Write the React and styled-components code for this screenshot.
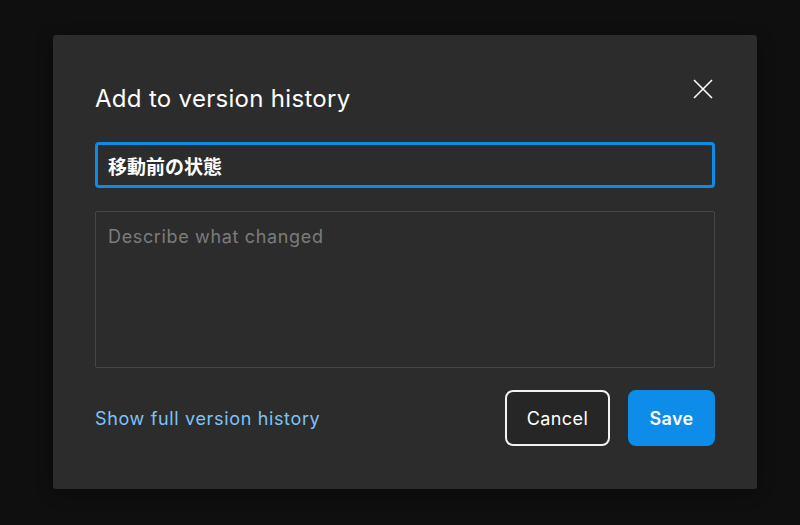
import React from "react";
import styled, { createGlobalStyle } from "styled-components";

const Global = createGlobalStyle`
  html, body { margin: 0; padding: 0; background: #0f0f0f; }
  body { font-family: Inter, "Noto Sans CJK JP", sans-serif; }
  * { box-sizing: border-box; }
`;

const Page = styled.div`
  width: 800px;
  height: 525px;
  padding: 35px 43px 36px 53px;
  background: #0f0f0f;
`;

const Dialog = styled.div`
  width: 704px;
  height: 454px;
  background: #2c2c2c;
  border-radius: 3px;
  box-shadow: 0 4px 16px rgba(0, 0, 0, 0.35);
  padding: 42px;
  display: flex;
  flex-direction: column;
`;

const Header = styled.div`
  display: flex;
  align-items: flex-start;
  justify-content: space-between;
  height: 65px;
`;

const Title = styled.h2`
  margin: 6px 0 0 0;
  font-size: 24px;
  font-weight: 400;
  line-height: 32px;
  color: #ffffff;
  letter-spacing: 0.3px;
`;

const CloseButton = styled.button`
  background: none;
  border: none;
  padding: 0;
  margin: 0;
  width: 24px;
  height: 24px;
  display: flex;
  align-items: center;
  justify-content: center;
  cursor: pointer;
`;

const NameInput = styled.div`
  height: 46px;
  border: 3px solid #0c8ce9;
  border-radius: 4px;
  padding: 0 10px;
  display: flex;
  align-items: center;
  font-family: Inter, "Noto Sans CJK JP", sans-serif;
  font-size: 19px;
  font-weight: 600;
  color: #ffffff;
`;

const TextArea = styled.div`
  margin-top: 23px;
  height: 157px;
  border: 1px solid #464646;
  border-radius: 2px;
  padding: 13px 12px;
  font-size: 18px;
  line-height: 24px;
  letter-spacing: 0.65px;
  color: #7c7c7c;
`;

const Footer = styled.div`
  margin-top: 22px;
  display: flex;
  align-items: center;
  justify-content: space-between;
`;

const Link = styled.a`
  font-size: 18px;
  letter-spacing: 0.65px;
  color: #7cc4f8;
  text-decoration: none;
  cursor: pointer;
`;

const Buttons = styled.div`
  display: flex;
  gap: 18px;
`;

const Button = styled.button`
  height: 56px;
  border-radius: 8px;
  font-family: Inter, sans-serif;
  font-size: 18px;
  letter-spacing: 0.4px;
  padding: 0;
  color: #ffffff;
  cursor: pointer;
  border: ${(p) => (p.$primary ? "none" : "2px solid #f2f2f2")};
  background: ${(p) => (p.$primary ? "#0d8ce9" : "#262626")};
  font-weight: ${(p) => (p.$primary ? 600 : 400)};
  width: ${(p) => p.$w}px;
`;

export default function App() {
  return (
    <Page>
      <Global />
      <Dialog>
        <Header>
          <Title>Add to version history</Title>
          <CloseButton aria-label="Close">
            <svg width="20" height="20" viewBox="0 0 20 20">
              <path d="M1 1 L19 19 M19 1 L1 19" stroke="#ffffff" strokeWidth="1.6" fill="none" />
            </svg>
          </CloseButton>
        </Header>
        <NameInput>移動前の状態</NameInput>
        <TextArea>Describe what changed</TextArea>
        <Footer>
          <Link>Show full version history</Link>
          <Buttons>
            <Button $w={105}>Cancel</Button>
            <Button $primary $w={87}>Save</Button>
          </Buttons>
        </Footer>
      </Dialog>
    </Page>
  );
}
